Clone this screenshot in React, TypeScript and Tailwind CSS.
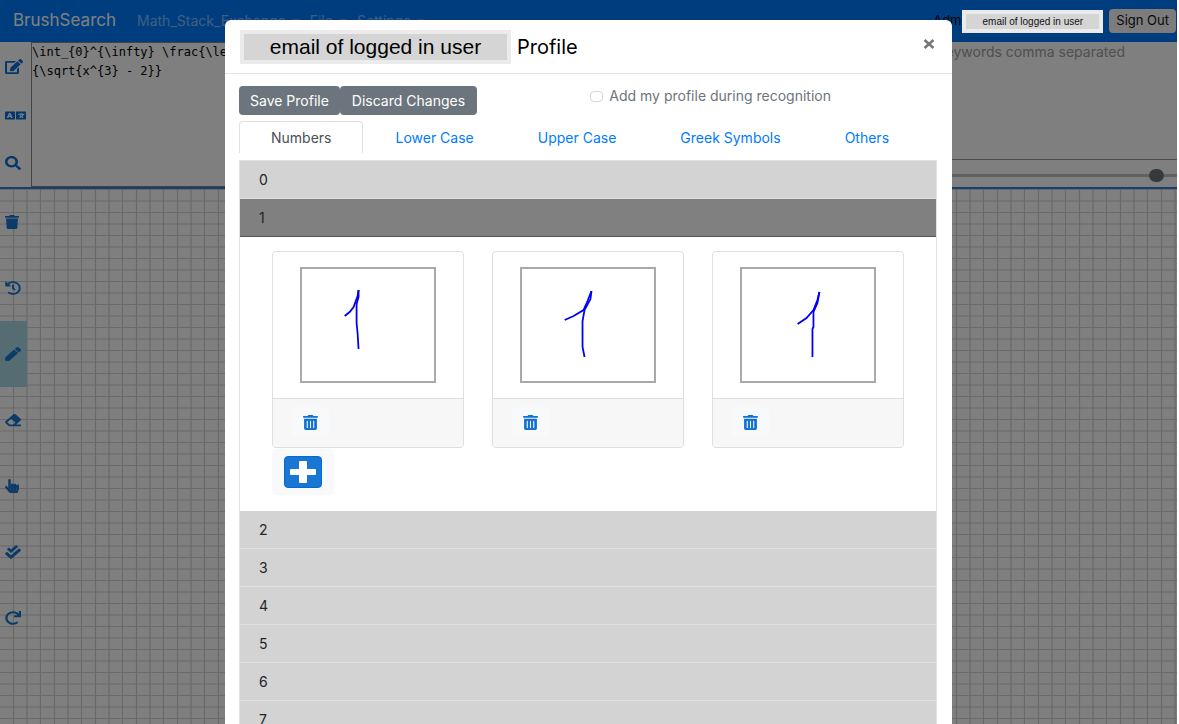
import { useState } from "react";
import type { ComponentType, SVGProps } from "react";
import {
  FaCaretDown,
  FaCheckDouble,
  FaEdit,
  FaEraser,
  FaHandPointer,
  FaHistory,
  FaLanguage,
  FaPen,
  FaRedo,
  FaSearch,
  FaTrash,
  FaTrashAlt,
} from "react-icons/fa";

type Icon = ComponentType<SVGProps<SVGSVGElement>>;

const panelTools: { label: string; Icon: Icon; size: string }[] = [
  { label: "Edit", Icon: FaEdit as Icon, size: "h-[15px] w-[18px]" },
  { label: "Translate", Icon: FaLanguage as Icon, size: "h-[13px] w-[21px]" },
  { label: "Search", Icon: FaSearch as Icon, size: "h-[14px] w-4" },
];

const canvasTools: { label: string; Icon: Icon; size: string; active?: boolean }[] = [
  { label: "Clear", Icon: FaTrash as Icon, size: "h-[14px] w-[14px]" },
  { label: "Undo", Icon: FaHistory as Icon, size: "h-[14px] w-4" },
  { label: "Draw", Icon: FaPen as Icon, size: "h-[14px] w-4", active: true },
  { label: "Erase", Icon: FaEraser as Icon, size: "h-[14px] w-4" },
  { label: "Select", Icon: FaHandPointer as Icon, size: "h-[14px] w-[14px]" },
  { label: "Confirm", Icon: FaCheckDouble as Icon, size: "h-[14px] w-4" },
  { label: "Redo", Icon: FaRedo as Icon, size: "h-[14px] w-4" },
];

const menus = ["Math_Stack_Exchange", "File", "Settings"];
const tabs = ["Numbers", "Lower Case", "Upper Case", "Greek Symbols", "Others"];
const digits = ["0", "1", "2", "3", "4", "5", "6", "7", "8", "9"];

const samples = [
  ["M45 49 L50 45 L54 40 L58 29 L59 23", "M59 23 L59 30 L57 37 L57 56 L58 66 L59 82"],
  ["M45 53 L54 49 L64 43 L68 34 L72 24", "M72 24 L71 32 L65 43 L63 54 L63 80 L65 90"],
  ["M58 57 L67 51 L74 43 L78 33 L80 25", "M80 25 L78 36 L74 45 L74 60 L73 62 L73 90"],
];

function GridCanvas() {
  return (
    <svg className="h-full w-full" aria-label="Drawing canvas">
      <defs>
        <pattern id="grid" width="41" height="23" patternUnits="userSpaceOnUse">
          <path
            d="M13.5 0V23M27 0V23M40.5 0V23M0 0.5H41M0 12H41"
            stroke="#d2d2d2"
            strokeWidth="1.2"
            fill="none"
          />
        </pattern>
      </defs>
      <rect width="100%" height="100%" fill="url(#grid)" />
    </svg>
  );
}

function SampleCard({ strokes }: { strokes: string[] }) {
  return (
    <li className="overflow-hidden rounded border border-[#dfdfdf] bg-white">
      <div className="px-[27px] py-[15px]">
        <svg
          viewBox="0 0 137 116"
          preserveAspectRatio="none"
          className="block h-[116px] w-full"
          aria-label="Handwritten 1"
        >
          <rect x="1" y="1" width="135" height="114" fill="none" stroke="#a9a9a9" strokeWidth="2" />
          {strokes.map((d) => (
            <path key={d} d={d} fill="none" stroke="#0000f5" strokeWidth="1.8" />
          ))}
        </svg>
      </div>
      <div className="border-t border-[#dfdfdf] bg-[#f7f7f7] px-[19px] pt-2 pb-[10px]">
        <button
          type="button"
          aria-label="Delete sample"
          className="flex h-[30px] w-[37px] items-center justify-center rounded bg-[#f8f9fa] text-[#1171d4]"
        >
          <FaTrashAlt preserveAspectRatio="none" className="h-[15px] w-[15px]" />
        </button>
      </div>
    </li>
  );
}

function ProfileDialog() {
  const [tab, setTab] = useState("Numbers");
  const [open, setOpen] = useState("1");

  return (
    <section
      role="dialog"
      aria-labelledby="profile-title"
      className="mx-auto mt-5 w-full max-w-[727px] rounded-t-md bg-white"
    >
      <header className="flex h-[54px] items-center justify-between border-b border-[#e3e5e8] px-[15px]">
        <h1 id="profile-title" className="flex items-center gap-[6px] text-xl text-black">
          <span className="flex h-[34px] w-[271px] items-center justify-center border-4 border-[#ebebeb] bg-[#d5d5d5] font-['Liberation_Sans',sans-serif] text-[21px]">
            email of logged in user
          </span>
          Profile
        </h1>
        <button type="button" aria-label="Close" className="mr-[2px] mb-[6px] text-[#777]">
          <svg viewBox="0 0 12 10" className="h-[10px] w-3">
            <path d="M1.5 1 L10.5 9 M10.5 1 L1.5 9" stroke="currentColor" strokeWidth="2.6" fill="none" />
          </svg>
        </button>
      </header>

      <div className="pt-3 pr-[15px] pl-[14px]">
        <div className="flex justify-between pr-[106px]">
          <div className="flex text-sm text-white">
            <button type="button" className="h-[29px] rounded bg-[#6c757d] px-[11px]">
              Save Profile
            </button>
            <button type="button" className="h-[29px] rounded bg-[#6c757d] px-3">
              Discard Changes
            </button>
          </div>
          <label className="flex h-5 items-center gap-[6px] text-sm text-[#6c757d]">
            <input
              type="checkbox"
              className="h-[11px] w-[13px] appearance-none rounded-sm border border-[#d5d5d5] bg-white checked:bg-[#007bff]"
            />
            Add my profile during recognition
          </label>
        </div>

        <div role="tablist" className="mt-[6px] flex text-sm">
          {tabs.map((name) => (
            <button
              key={name}
              type="button"
              role="tab"
              aria-selected={tab === name}
              onClick={() => setTab(name)}
              className={
                tab === name
                  ? "h-8 rounded-t border border-b-0 border-[#dee2e6] px-[31px] text-[#495057]"
                  : "h-8 border border-b-0 border-transparent px-[31px] text-[#007bff]"
              }
            >
              {name}
            </button>
          ))}
        </div>

        <div className="mt-[7px] border border-b-0 border-[#e0e0e0] text-sm text-[#212529]">
          {digits.map((digit) => (
            <div key={digit}>
              <button
                type="button"
                aria-expanded={open === digit}
                onClick={() => setOpen(open === digit ? "" : digit)}
                className={
                  open === digit
                    ? "block h-[38px] w-full border-b border-[#555] bg-[#808080] px-[19px] text-left"
                    : "block h-[38px] w-full border-b border-[#dfdfdf] bg-[#d3d3d3] px-[19px] text-left"
                }
              >
                {digit}
              </button>
              {open === digit && (
                <div className="px-8 pt-[14px] pb-4">
                  <ul className="grid grid-cols-3 gap-7">
                    {samples.map((strokes, i) => (
                      <SampleCard key={i} strokes={strokes} />
                    ))}
                  </ul>
                  <button
                    type="button"
                    aria-label="Add sample"
                    className="mt-px flex h-[46px] w-[62px] items-center justify-center rounded bg-[#f8f9fa]"
                  >
                    <span className="flex h-8 w-[38px] items-center justify-center rounded border border-[#0069d9] bg-[#1976d2] text-white">
                      <svg viewBox="0 0 26 22" className="h-[22px] w-[26px]">
                        <path
                          d="M10 0h6q1 0 1 1v7h8q1 0 1 1v4q0 1-1 1h-8v7q0 1-1 1h-6q-1 0-1-1v-7H1q-1 0-1-1V9q0-1 1-1h8V1q0-1 1-1z"
                          fill="currentColor"
                        />
                      </svg>
                    </span>
                  </button>
                </div>
              )}
            </div>
          ))}
        </div>
      </div>
    </section>
  );
}

export default function App() {
  return (
    <div className="h-screen overflow-hidden bg-white pr-0.5 font-['Inter','Liberation_Sans',sans-serif]">
      <div className="relative flex h-full flex-col overflow-hidden">
        <nav className="flex h-[42px] shrink-0 items-center bg-[#007bff] pr-px pl-[13px]">
          <a href="#home" className="text-[17px] text-white">
            BrushSearch
          </a>
          <div className="ml-[21px] flex gap-2 text-sm text-white/50">
            {menus.map((menu) => (
              <button key={menu} type="button" className="flex items-center gap-1">
                {menu}
                <FaCaretDown className="h-3 w-3" />
              </button>
            ))}
          </div>
          <div className="ml-auto flex items-center gap-[6px]">
            <span className="-mr-4 text-[13px] text-black">Admin</span>
            <span className="relative z-20 flex h-[23px] w-[141px] items-center justify-center border-4 border-[#ebebeb] bg-[#d5d5d5] font-['Liberation_Sans',sans-serif] text-[10px] text-[#111]">
              email of logged in user
            </span>
            <button type="button" className="h-6 rounded bg-[#f8f9fa] px-[7px] text-[13px] text-[#111]">
              Sign Out
            </button>
          </div>
        </nav>

        <main className="flex min-h-0 flex-1 flex-col">
          <div className="flex h-[147px] shrink-0 border-b-2 border-[#2f7fe0] bg-white">
            <div className="flex w-[31px] flex-col items-start justify-between py-[17px] pl-[5px] text-[#0b6fd8]">
              {panelTools.map(({ label, Icon, size }) => (
                <button key={label} type="button" aria-label={label}>
                  <Icon preserveAspectRatio="none" className={size} />
                </button>
              ))}
            </div>
            <textarea
              aria-label="LaTeX expression"
              className="w-[500px] resize-none border border-[#888] bg-white font-['DejaVu_Sans_Mono',monospace] text-[12px] leading-[19px] text-black"
              defaultValue={"\\int_{0}^{\\infty} \\frac{\\left(x\\right)}\n{\\sqrt{x^{3} - 2}}"}
            />
            <div className="flex flex-1 flex-col">
              <textarea
                aria-label="Keywords"
                placeholder="Enter keywords comma separated"
                className="h-[118px] resize-none border-b border-[#999] pr-[52px] text-right text-sm placeholder:text-[#a0a0a0]"
              />
              <input
                type="range"
                aria-label="Canvas size"
                defaultValue={98}
                className="mt-2 h-[14px] w-full appearance-none bg-transparent [&::-webkit-slider-runnable-track]:h-[3px] [&::-webkit-slider-runnable-track]:bg-[#bfc4ca] [&::-webkit-slider-thumb]:-mt-[5px] [&::-webkit-slider-thumb]:h-[13px] [&::-webkit-slider-thumb]:w-[15px] [&::-webkit-slider-thumb]:appearance-none [&::-webkit-slider-thumb]:rounded-full [&::-webkit-slider-thumb]:bg-[#6c757d]"
              />
            </div>
          </div>

          <div className="relative min-h-0 flex-1">
            <GridCanvas />
            <div className="absolute top-0 left-0 flex w-[27px] flex-col text-[#1976d2]">
              {canvasTools.map(({ label, Icon, size, active }) => (
                <button
                  key={label}
                  type="button"
                  aria-label={label}
                  className={
                    active
                      ? "flex h-[66px] items-center bg-[#add8e6] pl-[5px]"
                      : "flex h-[66px] items-center pl-[5px]"
                  }
                >
                  <Icon preserveAspectRatio="none" className={size} />
                </button>
              ))}
            </div>
          </div>
        </main>

        <div className="absolute inset-0 z-10 bg-black/50">
          <ProfileDialog />
        </div>
      </div>
    </div>
  );
}
